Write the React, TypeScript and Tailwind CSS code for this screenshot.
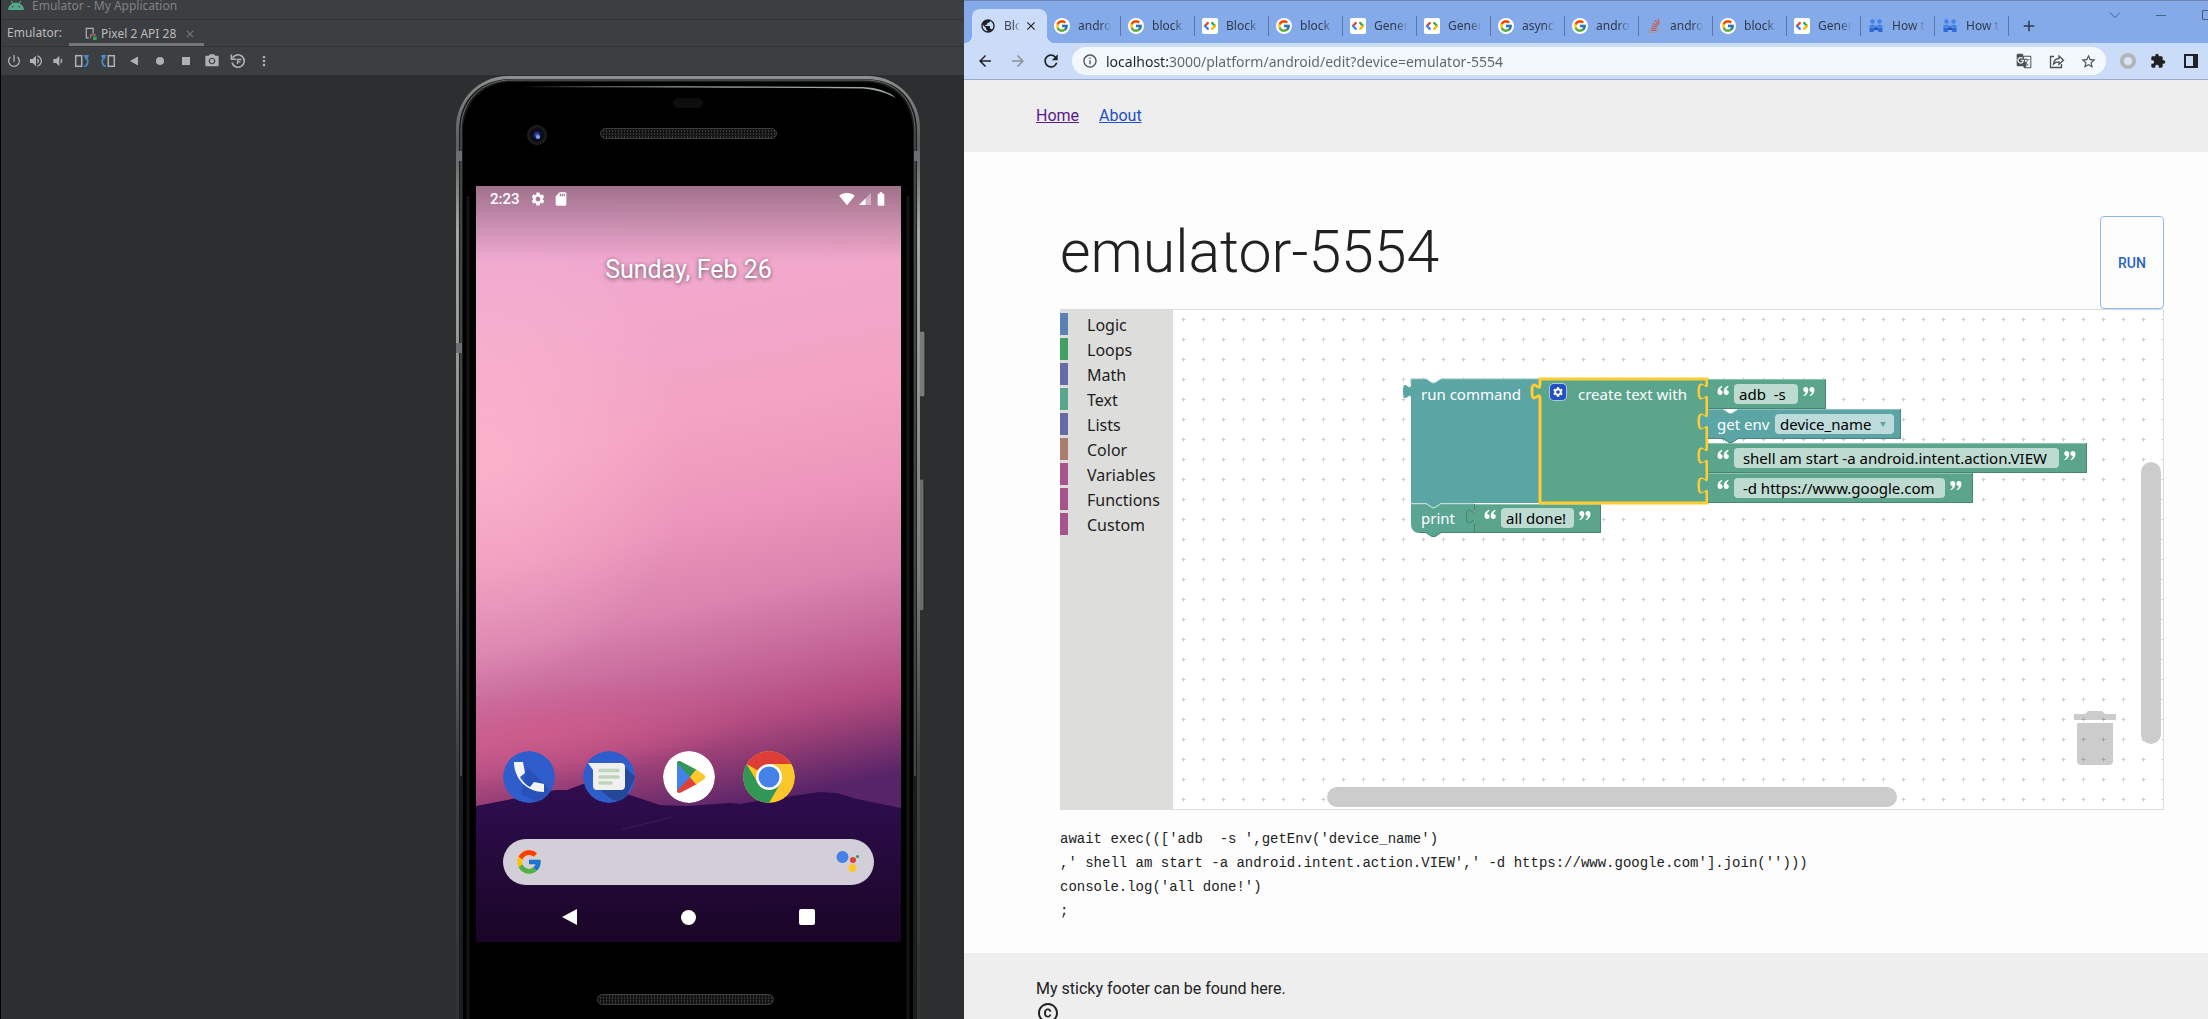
import React from 'react';
import { FcGoogle } from 'react-icons/fc';
import {
  MdPowerSettingsNew,
  MdVolumeUp,
  MdVolumeDown,
  MdCameraAlt,
  MdMoreVert,
  MdArrowBack,
  MdArrowForward,
  MdRefresh,
  MdInfoOutline,
  MdStarBorder,
  MdExtension,
  MdAdd,
  MdClose,
  MdSettings,
  MdSdCard,
  MdBatteryFull,
  MdSignalWifi4Bar,
  MdGTranslate,
  MdOutlineCopyright,
  MdPublic,
} from 'react-icons/md';

/* ---------- Emulator window ---------- */

function RotateIcon({ flip = false }: { flip?: boolean }) {
  return (
    <svg viewBox="0 0 16 16" className={flip ? 'size-4 -scale-x-100' : 'size-4'} aria-hidden="true">
      <rect x="1.7" y="2.7" width="6" height="10.6" fill="none" stroke="#afb1b3" strokeWidth="1.5" />
      <path d="M10 13.5c4-1 5-6 2.2-9" fill="none" stroke="#4a88c7" strokeWidth="1.8" />
      <path d="M9.5 2h5.2v1.8l-3 3z" fill="#4a88c7" />
    </svg>
  );
}

function SnapshotIcon() {
  return (
    <svg viewBox="0 0 16 16" className="size-4" fill="none" stroke="#afb1b3" strokeWidth="1.6" aria-hidden="true">
      <path d="M2.6 5A6.2 6.2 0 1 1 2 9.5" />
      <path d="M1.4 1.6v4.6h4.8" />
      <path d="M7.5 11V6.5h4M7.5 8.8h3" strokeWidth="1.3" />
    </svg>
  );
}

const emulatorTools: { label: string; icon: React.ReactNode }[] = [
  { label: 'Power', icon: <MdPowerSettingsNew className="size-4" /> },
  { label: 'Volume up', icon: <MdVolumeUp className="size-4" /> },
  { label: 'Volume down', icon: <MdVolumeDown className="size-4" /> },
  { label: 'Rotate left', icon: <RotateIcon /> },
  { label: 'Rotate right', icon: <RotateIcon flip /> },
  {
    label: 'Back',
    icon: (
      <svg viewBox="0 0 16 16" className="size-4" aria-hidden="true">
        <path d="M4 8l8-4.5v9z" fill="#afb1b3" />
      </svg>
    ),
  },
  { label: 'Home', icon: <span className="size-2 rounded-full bg-[#afb1b3]" /> },
  { label: 'Overview', icon: <span className="size-2 bg-[#afb1b3]" /> },
  { label: 'Take screenshot', icon: <MdCameraAlt className="size-4" /> },
  { label: 'Snapshots', icon: <SnapshotIcon /> },
  { label: 'More', icon: <MdMoreVert className="size-4" /> },
];

function EmulatorHeader() {
  return (
    <header className="bg-[#3c3f41] font-['Noto_Sans',sans-serif] text-xs text-[#bbbbbb]">
      <div className="flex h-5 items-start gap-2 border-b border-[#323435] pl-[7px] leading-3 text-[#808182]">
        <svg viewBox="0 0 16 10" className="h-2.5 w-4" aria-hidden="true">
          <path d="M0 10a8 8 0 0 1 4.200-6.600L3 1l.8-.5L5.200 3a8 8 0 0 1 5.600 0L12.200.5 13 1l-1.200 2.400A8 8 0 0 1 16 10z" fill="#55a887" />
          <circle cx="4.700" cy="6.800" r="0.8" fill="#3c3f41" />
          <circle cx="11.300" cy="6.800" r="0.8" fill="#3c3f41" />
        </svg>
        <span>Emulator - My Application</span>
      </div>
      <div className="flex h-[27px] items-stretch border-b border-[#323435] pl-1.5">
        <span className="flex w-[62px] items-center">Emulator:</span>
        <button type="button" className="flex items-center gap-1 border-b-3 border-[#747678] pt-1 pr-2 pl-4">
          <svg viewBox="0 0 14 16" className="h-4 w-3" fill="none" aria-hidden="true">
            <path d="M4.5 12.5h-3v-11h8v6" stroke="#afb1b3" strokeWidth="1.4" />
            <path d="M6.5 13V9h6.500" stroke="#b0708c" strokeWidth="1.4" />
            <rect x="9.500" y="11" width="4" height="4" fill="#33a852" />
          </svg>
          <span>Pixel 2 API 28</span>
          <MdClose className="ml-1 size-3 text-[#77797b]" />
        </button>
      </div>
      <div className="flex h-7 items-center pl-0.5 text-[#afb1b3]">
        {emulatorTools.map((t, i) => (
          <button
            key={t.label}
            type="button"
            aria-label={t.label}
            className={i < 3 ? 'flex w-[22px] items-center justify-center' : 'flex w-[26px] items-center justify-center'}
          >
            {t.icon}
          </button>
        ))}
      </div>
    </header>
  );
}

function PhoneFrame() {
  return (
    <svg viewBox="0 0 470 980" className="absolute inset-x-0 top-0 h-[980px] w-[470px]" aria-hidden="true">
      <defs>
        <linearGradient id="rim" x1="0" y1="0" x2="0" y2="1">
          <stop offset="0" stopColor="#8d9090" />
          <stop offset="0.06" stopColor="#5c5e5f" />
          <stop offset="0.14" stopColor="#a4a6a6" />
          <stop offset="0.45" stopColor="#7d8080" />
          <stop offset="0.62" stopColor="#3c3e40" />
          <stop offset="1" stopColor="#2a2b2c" />
        </linearGradient>
        <pattern id="mesh" width="3" height="3" patternUnits="userSpaceOnUse">
          <rect width="3" height="3" fill="#141414" />
          <rect width="1" height="2" fill="#3a3a3a" />
        </pattern>
        <radialGradient id="lens">
          <stop offset="0" stopColor="#4a6fd0" />
          <stop offset="0.3" stopColor="#1b1e66" />
          <stop offset="0.5" stopColor="#08080f" />
          <stop offset="1" stopColor="#222222" />
        </radialGradient>
      </defs>
      <rect x="463" y="255" width="6" height="66" rx="2" fill="#77797a" stroke="#222" />
      <rect x="463" y="403" width="5" height="132" rx="2" fill="#6a6c6d" stroke="#222" />
      <rect x="0" y="0" width="464" height="1100" rx="52" fill="url(#rim)" />
      <path d="M3 1100V55C3 22 25 3 55 3h354c32 0 52 20 52 52v1045" fill="#1b1c1c" />
      <path d="M5 700V55C5 24 26 4 56 4h352c32 0 51 20 51 52v644" fill="none" stroke="#6c6e6e" strokeWidth="1" />
      <path d="M7 1100V56C7 26 27 6 57 6h350c31 0 50 19 50 51v1043" fill="#000" />
      <path d="M62 11q150-1.500 345 0 22 1 33 11-14-8-33-9.500-195-1.500-345-1.500z" fill="#9ba5a0" />
      <path d="M12 120v860M452 120v860" stroke="#141414" strokeWidth="3" />
      <path d="M0 75h6v10H0zM0 267h6v10H0zM458 75h6v10h-6z" fill="#6a6d72" />
      <rect x="217" y="22" width="30" height="10" rx="5" fill="#0b0d0e" />
      <circle cx="81" cy="59" r="10" fill="url(#lens)" />
      <circle cx="82" cy="61" r="2" fill="#7fa4ea" />
      <rect x="144.500" y="52.500" width="176" height="10" rx="5" fill="url(#mesh)" stroke="#3d3d3d" />
      <rect x="141.500" y="918.500" width="176" height="10" rx="5" fill="url(#mesh)" stroke="#3d3d3d" />
    </svg>
  );
}

function Wallpaper() {
  return (
    <svg viewBox="0 0 425 756" preserveAspectRatio="none" className="absolute inset-0 size-full" aria-hidden="true">
      <defs>
        <linearGradient id="sky" x1="0.44" y1="0" x2="0.56" y2="1">
          <stop offset="0" stopColor="#eea9d2" />
          <stop offset="0.16" stopColor="#f2a8cb" />
          <stop offset="0.32" stopColor="#f3a2c2" />
          <stop offset="0.45" stopColor="#eb95ba" />
          <stop offset="0.56" stopColor="#d983ae" />
          <stop offset="0.65" stopColor="#c46698" />
          <stop offset="0.72" stopColor="#b34c80" />
          <stop offset="0.77" stopColor="#8d3a72" />
          <stop offset="0.83" stopColor="#582468" />
        </linearGradient>
        <linearGradient id="shade" x1="0" y1="0" x2="0" y2="1">
          <stop offset="0" stopColor="#000" stopOpacity="0.33" />
          <stop offset="1" stopColor="#000" stopOpacity="0" />
        </linearGradient>
        <linearGradient id="hill" x1="0" y1="0" x2="0" y2="1">
          <stop offset="0" stopColor="#300d50" />
          <stop offset="0.5" stopColor="#240a3b" />
          <stop offset="1" stopColor="#1a0526" />
        </linearGradient>
        <radialGradient id="glow">
          <stop offset="0" stopColor="#ffbcd0" stopOpacity="0.6" />
          <stop offset="1" stopColor="#ffbcd0" stopOpacity="0" />
        </radialGradient>
        <radialGradient id="dusk">
          <stop offset="0" stopColor="#d45c8a" stopOpacity="0.65" />
          <stop offset="1" stopColor="#d45c8a" stopOpacity="0" />
        </radialGradient>
      </defs>
      <rect width="425" height="756" fill="url(#sky)" />
      <ellipse cx="10" cy="270" rx="200" ry="230" fill="url(#glow)" />
      <ellipse cx="60" cy="548" rx="220" ry="50" fill="url(#dusk)" transform="rotate(-6 60 548)" />
      <rect width="425" height="75" fill="url(#shade)" />
      <path
        d="M0 620 31 614 79 604 91 604 107 598 134 601 154 609 184 619 211 620 254 617 264 618 301 612 344 606 361 607 381 613 425 622V756H0z"
        fill="url(#hill)"
      />
      <path d="M146 643q30-6 50-12" stroke="#3d1a5c" fill="none" />
    </svg>
  );
}

const appIcon = 'size-[52px] shrink-0 overflow-hidden rounded-full';

function PhoneScreen() {
  return (
    <div className="relative flex h-[756px] flex-col overflow-hidden font-[Roboto,sans-serif] text-white">
      <Wallpaper />
      <div className="relative flex h-[26px] items-center pr-3 pl-3.5">
        <span className="text-[15px] font-medium">2:23</span>
        <MdSettings className="ml-2.5 size-4" />
        <MdSdCard className="ml-[7px] size-4" />
        <MdSignalWifi4Bar className="ml-auto size-4" />
        <svg viewBox="0 0 16 16" className="ml-0.5 size-4" aria-hidden="true">
          <path d="M14 2v12H2z" fill="#fff" fillOpacity="0.4" />
          <path d="M8.500 7.500V14H2z" fill="#fff" />
        </svg>
        <MdBatteryFull className="size-4" />
      </div>
      <p className="relative mt-10 text-center text-[25px] leading-9 [text-shadow:0_1px_4px_rgba(0,0,0,0.6)]">
        Sunday, Feb 26
      </p>
      <div className="relative mt-auto flex gap-7 pl-[27px]">
        <button type="button" aria-label="Phone" className={appIcon}>
          <svg viewBox="0 0 52 52" aria-hidden="true">
            <circle cx="26" cy="26" r="26" fill="#2f5dcb" />
            <path d="M24 16l26 26-14 10-18-9z" fill="#2852b9" />
            <path
              d="M11 11h9l2 11-5 4c3 5 5 7 10 10l4-5 10 2v8C24 41 11 28 11 11z"
              fill="#f3f3f4"
            />
          </svg>
        </button>
        <button type="button" aria-label="Messages" className={appIcon}>
          <svg viewBox="0 0 52 52" aria-hidden="true">
            <circle cx="26" cy="26" r="26" fill="#2f5dcb" />
            <path d="M41 15l11 11-12 26-12-4-16-13z" fill="#24479b" />
            <path d="M5 12h33q4 0 4 4v19q0 4-4 4H14q-4 0-4-4V19z" fill="#f0f0f1" />
            <path d="M17 19.500h18M17 26h18M17 32h11" stroke="#c0d3bd" strokeWidth="3.500" strokeLinecap="round" />
          </svg>
        </button>
        <button type="button" aria-label="Play Store" className={appIcon}>
          <svg viewBox="0 0 52 52" aria-hidden="true">
            <circle cx="26" cy="26" r="26" fill="#fff" />
            <path d="M14 11v30l14-15z" fill="#4582e8" />
            <path d="M14 12c0-2 2-2.500 4-1.500L34 19l-7 7z" fill="#329655" />
            <path d="M14 40c0 2 2 2.500 4 1.500L34 33l-7-7z" fill="#df4138" />
            <path d="M33 18.500l7 4.500c3 2 3 4 0 6l-7 4.500-6-7.500z" fill="#fcc72b" />
          </svg>
        </button>
        <button type="button" aria-label="Chrome" className={appIcon}>
          <svg viewBox="0 0 52 52" aria-hidden="true">
            <circle cx="26" cy="26" r="26" fill="#fcc72b" />
            <path d="M26 26L3.500 13A26 26 0 0 1 48.500 13H26z" fill="#de3e38" />
            <path d="M26 26l0 26A26 26 0 0 1 3.500 13L15 32z" fill="#329655" />
            <path d="M26 52l11.300-19.500L26 26 15 32z" fill="#329655" />
            <circle cx="26" cy="26" r="13" fill="#fff" />
            <circle cx="26" cy="26" r="10.500" fill="#4582e8" />
          </svg>
        </button>
      </div>
      <div className="relative mx-[27px] mt-9 flex h-[46px] items-center justify-between rounded-full bg-[#d3cfd9] px-3">
        <FcGoogle className="size-7" />
        <svg viewBox="0 0 28 28" className="size-7" aria-hidden="true">
          <circle cx="8.500" cy="9" r="6" fill="#4582e8" />
          <circle cx="19" cy="12" r="3" fill="#de3e38" />
          <circle cx="23.500" cy="8.500" r="1.500" fill="#329655" />
          <circle cx="18.500" cy="20" r="4" fill="#fcc72b" />
        </svg>
      </div>
      <nav className="relative mt-5 mb-[13px] flex h-6 items-center justify-between px-[86px]">
        <button type="button" aria-label="Back">
          <svg viewBox="0 0 16 18" className="h-[18px] w-4" aria-hidden="true">
            <path d="M0 9L15 1v16z" fill="#fff" />
          </svg>
        </button>
        <button type="button" aria-label="Home" className="size-[15px] rounded-full bg-white" />
        <button type="button" aria-label="Overview" className="size-4 rounded-xs bg-white" />
      </nav>
    </div>
  );
}

function EmulatorWindow() {
  return (
    <section className="flex min-w-0 flex-col overflow-hidden border-l border-black bg-[#2d2e30]">
      <EmulatorHeader />
      <div className="flex flex-1 justify-end overflow-hidden pr-[38px] pt-px">
        <div className="relative w-[470px] shrink-0 pt-[110px] pr-[25px] pl-5">
          <PhoneFrame />
          <PhoneScreen />
        </div>
      </div>
    </section>
  );
}

/* ---------- Browser chrome ---------- */

function GoogleFavicon() {
  return (
    <span className="flex size-4 shrink-0 items-center justify-center rounded-full bg-white">
      <FcGoogle className="size-3.5" />
    </span>
  );
}

function DevelopersFavicon() {
  return (
    <svg viewBox="0 0 16 16" className="size-4 shrink-0" fill="none" strokeWidth="2.400" strokeLinecap="round" aria-hidden="true">
      <rect width="16" height="16" rx="2" fill="#fff" />
      <path d="M5.800 5L3 7.800" stroke="#ea4335" />
      <path d="M3 8l2.800 2.800" stroke="#4285f4" />
      <path d="M10.200 5L13 7.800" stroke="#34a853" />
      <path d="M13 8l-2.800 2.800" stroke="#fbbc04" />
    </svg>
  );
}

function StackFavicon() {
  return (
    <svg viewBox="0 0 16 16" className="size-4 shrink-0" fill="none" aria-hidden="true">
      <path d="M3 10v4.500h9V10" stroke="#9a9fb0" strokeWidth="1.200" />
      <path d="M5 12.500h5.500M5 10.400l5.500.6M5.500 7.800l5.300 1.600M6.800 5.200l4.800 2.900M9 2.500l3.500 4.300M12 .8l1 5" stroke="#d0583a" strokeWidth="1.200" />
    </svg>
  );
}

function GroupsFavicon() {
  return (
    <svg viewBox="0 0 16 16" className="size-4 shrink-0" aria-hidden="true">
      <circle cx="4.500" cy="3.500" r="2.300" fill="#4285e8" />
      <circle cx="11.500" cy="3.500" r="2.300" fill="#4285e8" />
      <path d="M1 8q3.500-3 7 0 3.500-3 7 0v1H1z" fill="#4285e8" />
      <path d="M1.500 9.500h13V14H10.500l-1-2h-3l-1 2h-4z" fill="#2f6ad6" />
      <path d="M6.500 10q1.500-1.500 3 0v2h-3z" fill="#1e4fae" />
    </svg>
  );
}

const tabs: { icon: React.ReactNode; title: string }[] = [
  { icon: <GoogleFavicon />, title: 'andro' },
  { icon: <GoogleFavicon />, title: 'block' },
  { icon: <DevelopersFavicon />, title: 'Block' },
  { icon: <GoogleFavicon />, title: 'block' },
  { icon: <DevelopersFavicon />, title: 'Gener' },
  { icon: <DevelopersFavicon />, title: 'Gener' },
  { icon: <GoogleFavicon />, title: 'async' },
  { icon: <GoogleFavicon />, title: 'andro' },
  { icon: <StackFavicon />, title: 'andro' },
  { icon: <GoogleFavicon />, title: 'block' },
  { icon: <DevelopersFavicon />, title: 'Gener' },
  { icon: <GroupsFavicon />, title: 'How t' },
  { icon: <GroupsFavicon />, title: 'How t' },
];

const fade = '[mask-image:linear-gradient(90deg,#000_65%,transparent)]';

function TabStrip() {
  return (
    <div className="flex h-[43px] items-end border-t border-[#6b85b5] bg-[#84aaea] pl-2 text-xs text-[#2f3a4c]">
      <div className="relative flex h-[34px] w-[75px] shrink-0 items-center rounded-t-lg bg-[#cbdcf8] pl-2 text-[#3c4350]">
        <span className="absolute bottom-0 -left-2 size-2 bg-[radial-gradient(circle_at_0_0,transparent_8px,#cbdcf8_8px)]" />
        <span className="absolute -right-2 bottom-0 size-2 bg-[radial-gradient(circle_at_100%_0,transparent_8px,#cbdcf8_8px)]" />
        <MdPublic className="size-4 shrink-0 text-[#202124]" />
        <span className={`ml-2 w-4 overflow-hidden whitespace-nowrap ${fade}`}>Blo</span>
        <button type="button" aria-label="Close tab" className="ml-1 flex size-3.5 items-center justify-center text-[#202124]">
          <MdClose className="size-3.5" />
        </button>
      </div>
      {tabs.map((t, i) => (
        <button key={i} type="button" className="flex h-[34px] w-[74px] shrink-0 items-center text-left">
          <span className="flex h-5 w-full items-center gap-2 border-r border-[#5c76a5] pl-[7px]">
            {t.icon}
            <span className={`w-[34px] overflow-hidden whitespace-nowrap ${fade}`}>{t.title}</span>
          </span>
        </button>
      ))}
      <button type="button" aria-label="New tab" className="ml-[11px] flex h-[34px] items-center">
        <MdAdd className="size-[18px]" />
      </button>
      <div className="ml-auto flex shrink-0 items-center self-start overflow-hidden pt-2 text-[#4c6080]">
        <button type="button" aria-label="Search tabs" className="flex w-[46px] justify-center">
          <svg viewBox="0 0 12 12" className="size-3" fill="none" stroke="currentColor" aria-hidden="true">
            <path d="M1 3.500l5 5 5-5" />
          </svg>
        </button>
        <button type="button" aria-label="Minimize" className="flex w-[46px] justify-center">
          <svg viewBox="0 0 12 12" className="size-3" fill="none" stroke="currentColor" aria-hidden="true">
            <path d="M1 6.500h10" />
          </svg>
        </button>
        <button type="button" aria-label="Maximize" className="flex w-6 justify-end overflow-hidden">
          <svg viewBox="0 0 6 12" className="h-3 w-1.5" fill="none" stroke="currentColor" aria-hidden="true">
            <path d="M8 1.500H.5v9H8" />
          </svg>
        </button>
      </div>
    </div>
  );
}

function Toolbar() {
  return (
    <div className="flex h-[37px] items-center border-b border-[#98abc9] bg-[#cbdcf8] pr-2.5 pl-3 text-[#202124]">
      <button type="button" aria-label="Back" className="flex w-[33px]">
        <MdArrowBack className="size-[18px]" />
      </button>
      <button type="button" aria-label="Forward" className="flex w-8 text-[#8b8f96]">
        <MdArrowForward className="size-[18px]" />
      </button>
      <button type="button" aria-label="Reload" className="mr-[11px] flex w-5">
        <MdRefresh className="size-5" />
      </button>
      <div className="flex h-7 min-w-0 flex-1 items-center rounded-full bg-[#f3f8fd] pr-1 pl-2.5 text-[#4d5156]">
        <MdInfoOutline className="size-4 shrink-0" />
        <input
          aria-label="Address"
          defaultValue="localhost:3000/platform/android/edit?device=emulator-5554"
          className="ml-2 h-7 min-w-0 flex-1 bg-[linear-gradient(90deg,#202124_62px,#5f6368_62px)] bg-clip-text text-sm text-transparent outline-none"
        />
        <button type="button" aria-label="Translate" className="flex w-8 justify-center">
          <MdGTranslate className="size-4" />
        </button>
        <button type="button" aria-label="Share" className="flex w-[34px] justify-center">
          <svg viewBox="0 0 16 16" className="size-4" fill="none" stroke="currentColor" strokeWidth="1.300" aria-hidden="true">
            <path d="M5 3.500H1.500v11h11V11" />
            <path d="M4.500 11C5 7 7 5.500 10 5.500V3l4.500 4.200L10 11.200V8.800C7.500 8.800 6 9.300 4.500 11z" />
          </svg>
        </button>
        <button type="button" aria-label="Bookmark" className="flex w-7 justify-center">
          <MdStarBorder className="size-[17px]" />
        </button>
      </div>
      <button type="button" aria-label="Extension" className="ml-3.5 size-4 shrink-0 rounded-full border-4 border-[#b3b5b8] bg-[#d9e4f7]" />
      <button type="button" aria-label="Extensions" className="ml-3.5 flex">
        <MdExtension className="size-4" />
      </button>
      <button type="button" aria-label="Side panel" className="ml-[18px] h-3.5 w-3.5 border-2 border-r-[5px] border-[#202124]" />
    </div>
  );
}

/* ---------- Block editor ---------- */

function Toolbox() {
  const row = 'flex h-[22px] items-center border-l-8 pl-[19px] pt-0.5 leading-5';
  return (
    <ul className="flex w-[113px] shrink-0 flex-col gap-[3px] bg-[#dddddc] pt-[3px] font-['Noto_Sans',sans-serif] text-base text-[#1d1d1d]">
      <li className={`${row} border-[#5b80b2]`}>Logic</li>
      <li className={`${row} border-[#43a064]`}>Loops</li>
      <li className={`${row} border-[#676ba5]`}>Math</li>
      <li className={`${row} border-[#5ba58c]`}>Text</li>
      <li className={`${row} border-[#676ba5]`}>Lists</li>
      <li className={`${row} border-[#ac7d70]`}>Color</li>
      <li className={`${row} border-[#a6548c]`}>Variables</li>
      <li className={`${row} border-[#a6548c]`}>Functions</li>
      <li className={`${row} border-[#a6548c]`}>Custom</li>
    </ul>
  );
}

function Grid() {
  return (
    <svg className="absolute inset-0 size-full" aria-hidden="true">
      <defs>
        <pattern id="dots" width="20" height="20" patternUnits="userSpaceOnUse">
          <path d="M8.500 9.500h4M10.500 7.500v4" stroke="#ccc" />
        </pattern>
      </defs>
      <rect width="100%" height="100%" fill="url(#dots)" />
    </svg>
  );
}

function BlockShapes() {
  const tab = 'V20c0-10-8 8-8-7.500s8 2.500 8-7.500z';
  return (
    <svg viewBox="0 0 690 170" className="absolute left-[228px] top-[59px] h-[170px] w-[690px]" aria-hidden="true">
      <g transform="translate(10 10)">
        <path
          d={`M0 0H15l6 4h3l6-4H128V124H30l-6 4h-3l-6-4H0${tab}`}
          fill="#5ba5a5"
        />
        <path d="M0 5V0H15l6 4h3l6-4H128" fill="none" stroke="#8cc0c0" />
        <path d="M0 125H15l6 4h3l6-4H63v29H30l-6 4h-3l-6-4H8a8 8 0 0 1-8-8z" fill="#5ba593" />
        <path d="M0 125H15l6 4h3l6-4H63" fill="none" stroke="#8cc0b3" />
        <path d="M63 153.500H30l-6 4h-3l-6-4H8" fill="none" stroke="#49846f" />
        <path transform="translate(64 125)" d={`M0 0H126V29H0${tab}`} fill="#5ba58c" />
        <path d="M63.500 125v5c0 10-8-8-8 7.500s8-2.500 8 7.500v9" fill="none" stroke="#49846f" />
        <path d="M64 153.500H189.500V125" fill="none" stroke="#49846f" />
        <path d="M64 125.500H190" stroke="#8cc0af" />
        <path transform="translate(129 0)" d={`M0 0H167V124H0${tab}`} fill="#5ba58c" stroke="#fc3" strokeWidth="3" />
        <g fill="none" stroke="#fc3" strokeWidth="3">
          <path d="M296 5c0 10-8-8-8 7.500s8-2.500 8 7.500" />
          <path d="M296 35c0 10-8-8-8 7.500s8-2.500 8 7.500" />
          <path d="M296 69c0 10-8-8-8 7.500s8-2.500 8 7.500" />
          <path d="M296 99c0 10-8-8-8 7.500s8-2.500 8 7.500" />
        </g>
        <g transform="translate(297 0)">
          <path d={`M0 0H118V30H0${tab}`} fill="#5ba58c" />
          <path d="M0 29.500H117.500V0" fill="none" stroke="#49846f" />
          <path d="M0 .5H117" stroke="#8cc0af" />
        </g>
        <g transform="translate(297 30)">
          <path d={`M0 0H15l6 4h3l6-4H193V30H30l-6 4h-3l-6-4H0${tab}`} fill="#5ba5a5" />
          <path d="M15 0l6 4h3l6-4z" fill="#fff" />
          <path d="M0 29.500H15l6 4h3l6-4H192.500V0" fill="none" stroke="#498484" />
          <path d="M0 .5H15l6 4h3l6-4H192" fill="none" stroke="#8cc0c0" />
        </g>
        <g transform="translate(297 64)">
          <path d={`M0 0H379V30H0${tab}`} fill="#5ba58c" />
          <path d="M0 29.500H378.500V0" fill="none" stroke="#49846f" />
          <path d="M0 .5H378" stroke="#8cc0af" />
        </g>
        <g transform="translate(297 94)">
          <path d={`M0 0H265V30H0${tab}`} fill="#5ba58c" />
          <path d="M0 29.500H264.500V0" fill="none" stroke="#49846f" />
          <path d="M0 .5H264" stroke="#8cc0af" />
        </g>
      </g>
    </svg>
  );
}

function Quote({ close = false }: { close?: boolean }) {
  const d = 'M5 .8C2.200 1.800.5 4 .5 7c0 1.800 1.100 3 2.600 3s2.500-1.100 2.500-2.500S4.600 5.100 3.200 5.100C3.300 3.600 4.100 2.500 5.400 1.700z';
  return (
    <svg viewBox="0 0 12 12" className={close ? 'size-3 shrink-0 rotate-180' : 'size-3 shrink-0'} fill="#fff" aria-hidden="true">
      <path d={d} />
      <path d={d} transform="translate(6.200 0)" />
    </svg>
  );
}

function TextField({ place, width, value, label }: { place: string; width: string; value: string; label: string }) {
  return (
    <div className={`absolute flex h-[30px] items-start gap-[5px] ${place}`}>
      <span className="pt-1.5"><Quote /></span>
      <input
        aria-label={label}
        defaultValue={value}
        className={`mt-[5px] h-5 rounded-sm bg-[#bddbd1] pl-[5px] text-black outline-none ${width}`}
      />
      <span className="pt-1.5"><Quote close /></span>
    </div>
  );
}

function Workspace() {
  return (
    <div className="relative min-w-0 flex-1 overflow-hidden bg-white font-['Noto_Sans',sans-serif] text-[15px] leading-5 text-white">
      <Grid />
      <BlockShapes />
      <span className="absolute left-[248px] top-[74px] whitespace-nowrap">run command</span>
      <button
        type="button"
        aria-label="Edit items"
        className="absolute left-[377px] top-[74px] flex size-4 items-center justify-center rounded-sm bg-[#2450c4] ring-1 ring-[#a9c8e0]"
      >
        <MdSettings className="size-3" />
      </button>
      <span className="absolute left-[405px] top-[74px] whitespace-nowrap">create text with</span>
      <span className="absolute left-[248px] top-[198px] whitespace-nowrap">print</span>
      <span className="absolute left-[544px] top-[104px] whitespace-nowrap">get env</span>
      <span className="absolute left-[602px] top-[104px] h-5">
        <select
          aria-label="Environment variable"
          className="h-5 w-[119px] appearance-none rounded-sm bg-[#bddbdb] pl-[5px] text-black outline-none"
        >
          <option>device_name</option>
        </select>
        <svg viewBox="0 0 6 5" className="pointer-events-none absolute right-2 top-2 h-[5px] w-1.5" aria-hidden="true">
          <path d="M0 0h6L3 5z" fill="#5ba5a5" />
        </svg>
      </span>
      <TextField label="Text 1" place="left-[544px] top-[69px]" width="w-16" value="adb  -s " />
      <TextField label="Text 2" place="left-[544px] top-[133px]" width="w-[325px]" value=" shell am start -a android.intent.action.VIEW" />
      <TextField label="Text 3" place="left-[544px] top-[163px]" width="w-[211px]" value=" -d https://www.google.com" />
      <TextField label="Print text" place="left-[311px] top-[193px]" width="w-[73px]" value="all done!" />
      <svg viewBox="0 0 42 54" className="absolute right-[47px] bottom-11 h-[54px] w-[42px]" fill="#000" fillOpacity="0.2" aria-hidden="true">
        <path d="M0 3h11l3-3h14l3 3h11v6H0zM3 12h36v38q0 4-4 4H7q-4 0-4-4z" />
      </svg>
      <div className="absolute right-0.5 top-[152px] h-[282px] w-5 rounded-full bg-[#ccc]" />
      <div className="absolute bottom-0.5 left-[154px] h-5 w-[570px] rounded-full bg-[#ccc]" />
    </div>
  );
}

const code = `await exec((['adb  -s ',getEnv('device_name')
,' shell am start -a android.intent.action.VIEW',' -d https://www.google.com'].join('')))
console.log('all done!')
;`;

function Page() {
  return (
    <div className="flex flex-1 flex-col overflow-hidden bg-[#fdfdfd] font-[Roboto,sans-serif] text-base text-[#212121]">
      <nav className="flex h-[72px] shrink-0 items-center gap-5 bg-[#eeeeee] pl-[72px]">
        <a href="#home" className="text-[#551a8b] underline">Home</a>
        <a href="#about" className="text-[#2450c4] underline">About</a>
      </nav>
      <main className="shrink-0 pt-16 pr-11 pl-24">
        <div className="flex justify-between">
          <h1 className="mb-[21px] text-[59px] leading-[72px] font-light">emulator-5554</h1>
          <button type="button" className="w-16 rounded-sm border border-[#8ab8ea] text-sm font-medium text-[#2563c9]">
            RUN
          </button>
        </div>
        <div className="flex h-[501px] border border-l-0 border-[#dddddd]">
          <Toolbox />
          <Workspace />
        </div>
        <pre className="mt-[17px] font-['Liberation_Mono',monospace] text-sm leading-6">{code}</pre>
      </main>
      <footer className="mt-[30px] flex-1 bg-[#eeeeee] pt-6 pl-[72px]">
        <p className="leading-6">My sticky footer can be found here.</p>
        <MdOutlineCopyright className="size-6" />
      </footer>
    </div>
  );
}

export default function App() {
  return (
    <div className="grid h-screen grid-cols-[964fr_1244fr] grid-rows-[minmax(0,1fr)] overflow-hidden">
      <EmulatorWindow />
      <section className="flex min-w-0 flex-col overflow-hidden font-['Noto_Sans',sans-serif]">
        <TabStrip />
        <Toolbar />
        <Page />
      </section>
    </div>
  );
}
